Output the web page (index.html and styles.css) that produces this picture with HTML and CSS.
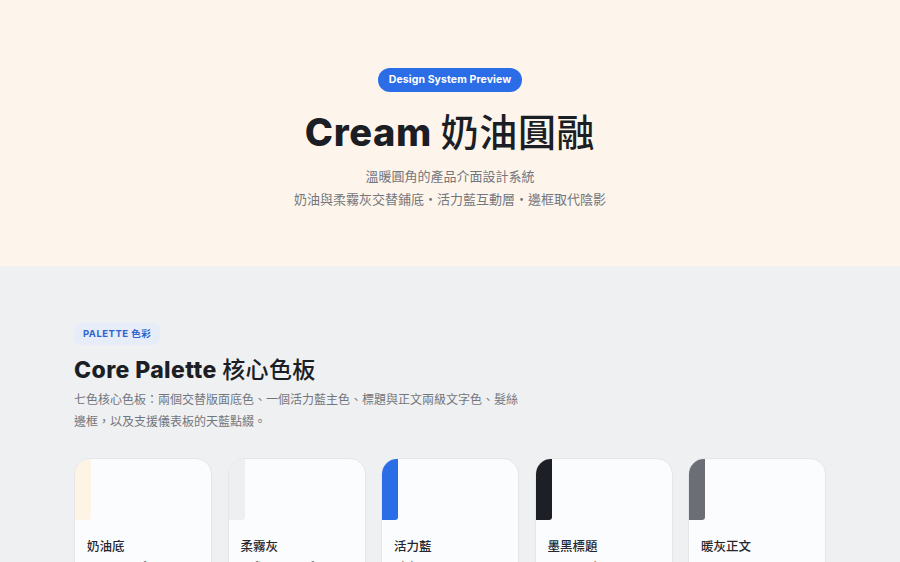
FILE: index.html
```html
<!DOCTYPE html>
<html lang="zh-Hant">
<head>
<meta charset="utf-8">
<title>Cream 奶油圓融</title>
<link rel="stylesheet" href="styles.css">
</head>
<body>
<header class="hero">
  <span class="badge">Design System Preview</span>
  <h1 class="hero-title">Cream <span class="cjk">奶油圓融</span></h1>
  <p class="hero-sub">溫暖圓角的產品介面設計系統<br>奶油與柔霧灰交替鋪底・活力藍互動層・邊框取代陰影</p>
</header>
<main class="section">
  <div class="container">
    <span class="eyebrow">PALETTE 色彩</span>
    <h2 class="section-title">Core Palette <span class="cjk">核心色板</span></h2>
    <p class="section-desc">七色核心色板：兩個交替版面底色、一個活力藍主色、標題與正文兩級文字色、髮絲邊框，以及支援儀表板的天藍點綴。</p>
    <div class="swatches">
      <div class="card">
        <div class="swatch sw-cream"></div>
        <div class="card-body"><div class="card-name">奶油底</div><div class="card-en">Cream Surface</div></div>
      </div>
      <div class="card">
        <div class="swatch sw-gray"></div>
        <div class="card-body"><div class="card-name">柔霧灰</div><div class="card-en">Soft Gray Surface</div></div>
      </div>
      <div class="card">
        <div class="swatch sw-blue"></div>
        <div class="card-body"><div class="card-name">活力藍</div><div class="card-en">Vivid Blue</div></div>
      </div>
      <div class="card">
        <div class="swatch sw-ink"></div>
        <div class="card-body"><div class="card-name">墨黑標題</div><div class="card-en">Ink Heading</div></div>
      </div>
      <div class="card">
        <div class="swatch sw-body"></div>
        <div class="card-body"><div class="card-name">暖灰正文</div><div class="card-en">Warm Body Gray</div></div>
      </div>
    </div>
  </div>
</main>
</body>
</html>
```
FILE: styles.css
```css
* { box-sizing: border-box; }
html, body { margin: 0; padding: 0; }
body {
  font-family: "Inter", "Noto Sans CJK TC", sans-serif;
  color: #1d1f25;
  background: #eff0f2;
}
.cjk {
  font-family: "Noto Sans CJK TC", sans-serif;
  font-weight: 500;
}
.hero {
  background: #fdf5eb;
  height: 266px;
  padding-top: 67px;
  text-align: center;
}
.badge {
  display: inline-block;
  height: 24px;
  line-height: 24px;
  padding: 0 11px;
  border-radius: 12px;
  background: #2b6de6;
  color: #fff;
  font-size: 10.5px;
  font-weight: 700;
  letter-spacing: 0.1px;
}
.hero-title {
  margin: 14px 0 0;
  font-size: 38px;
  line-height: 48px;
  font-weight: 800;
  color: #1c1e25;
  letter-spacing: 0.6px;
}
.hero-sub {
  margin: 8px 0 0;
  font-size: 13px;
  line-height: 23px;
  color: #73767d;
  font-family: "Noto Sans CJK TC", sans-serif;
}
.section {
  padding-top: 55px;
}
.container {
  width: 752px;
  margin: 0 auto;
}
.eyebrow {
  display: inline-block;
  height: 22px;
  line-height: 22px;
  padding: 0 9px;
  border-radius: 7px;
  background: #e7edf8;
  color: #2f63cf;
  font-size: 9.5px;
  font-weight: 700;
  letter-spacing: 0.5px;
}
.section-title {
  margin: 7px 0 0;
  font-size: 23px;
  line-height: 32px;
  font-weight: 800;
  color: #1c1e25;
  letter-spacing: 0.4px;
}
.section-desc {
  margin: 2px 0 0;
  width: 448px;
  font-size: 12px;
  line-height: 21.5px;
  color: #73767d;
  font-family: "Noto Sans CJK TC", sans-serif;
}
.swatches {
  margin-top: 27px;
  display: grid;
  grid-template-columns: repeat(5, 1fr);
  gap: 15.5px;
}
.card {
  background: #fbfcfd;
  border: 1px solid #e4e6ea;
  border-radius: 16px;
  overflow: hidden;
  height: 140px;
}
.swatch {
  width: 16px;
  height: 61px;
  border-radius: 0 0 3px 0;
}
.sw-cream { background: #fdf4e6; }
.sw-gray { background: #eeeff1; }
.sw-blue { background: #2b6de6; }
.sw-ink { background: #1d1f26; }
.sw-body { background: #6b6e74; }
.card-body {
  padding: 17px 12px 12px;
}
.card-name {
  font-size: 12.5px;
  line-height: 18px;
  font-weight: 500;
  color: #25272d;
  font-family: "Noto Sans CJK TC", sans-serif;
}
.card-en {
  margin-top: 4px;
  font-size: 11px;
  color: #7b7e85;
}
```
